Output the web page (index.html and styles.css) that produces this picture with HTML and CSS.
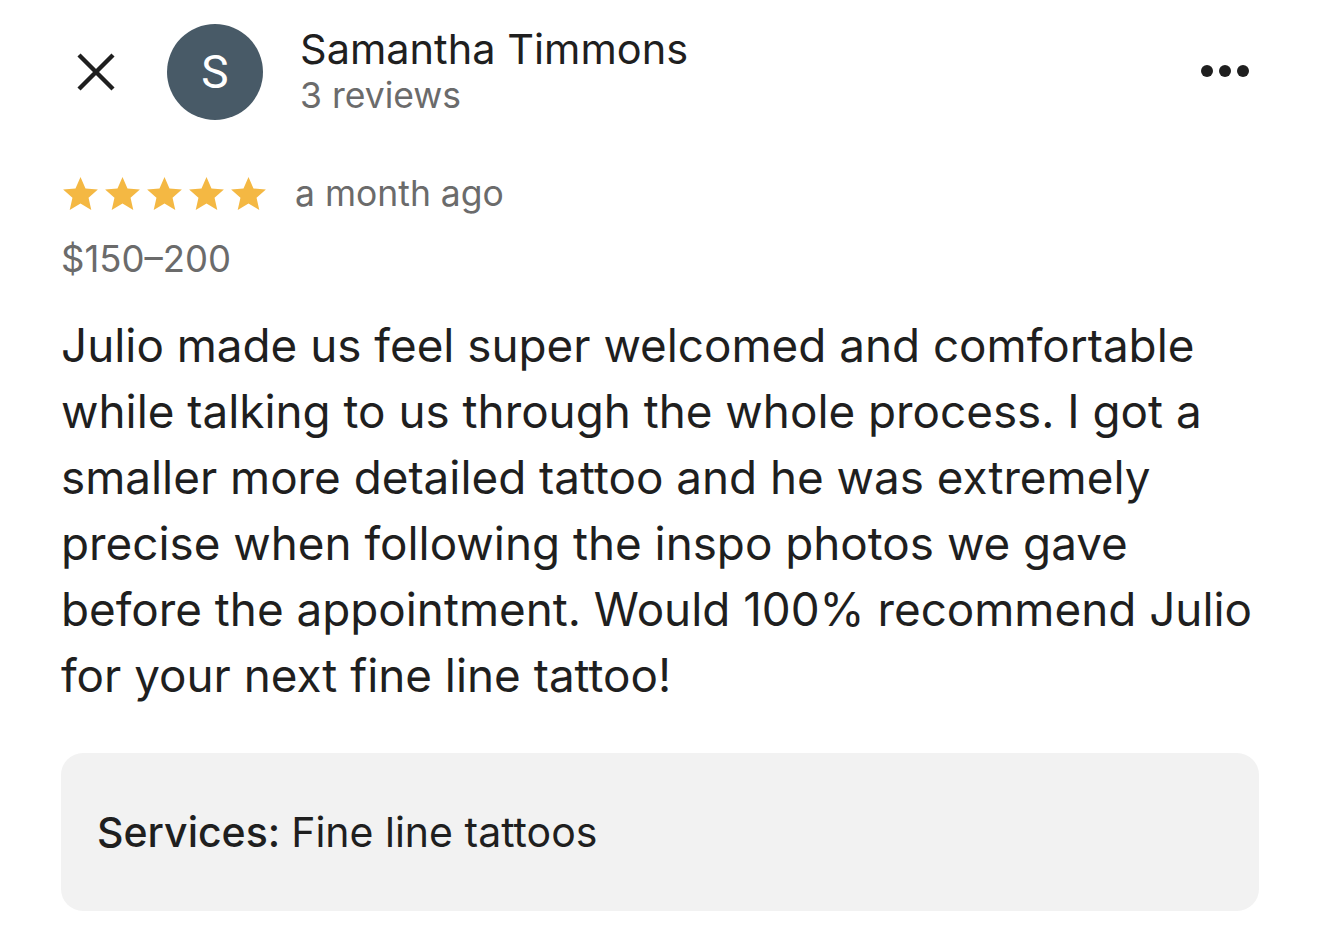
FILE: index.html
```html
<!DOCTYPE html>
<html lang="en">
<head>
<meta charset="utf-8">
<title>Review</title>
<link rel="stylesheet" href="styles.css">
</head>
<body>
<main class="page">
  <header class="header">
    <button class="close" aria-label="Close">
      <svg viewBox="0 0 40 40" width="40" height="40"><path d="M3 3 L37 37 M37 3 L3 37" stroke="#1f1f1f" stroke-width="4.4" fill="none"/></svg>
    </button>
    <div class="avatar">S</div>
    <div class="who">
      <div class="name">Samantha Timmons</div>
      <div class="count">3 reviews</div>
    </div>
    <button class="more" aria-label="More">
      <span class="dot"></span><span class="dot"></span><span class="dot"></span>
    </button>
  </header>

  <div class="meta">
    <div class="stars">
      <svg viewBox="1.2 1.6 21.6 20.5"><path d="M12 1.6l3.1 7.1 7.7.7-5.8 5.1 1.7 7.6L12 18.1l-6.7 4 1.7-7.6L1.2 9.4l7.7-.7z"/></svg>
      <svg viewBox="1.2 1.6 21.6 20.5"><path d="M12 1.6l3.1 7.1 7.7.7-5.8 5.1 1.7 7.6L12 18.1l-6.7 4 1.7-7.6L1.2 9.4l7.7-.7z"/></svg>
      <svg viewBox="1.2 1.6 21.6 20.5"><path d="M12 1.6l3.1 7.1 7.7.7-5.8 5.1 1.7 7.6L12 18.1l-6.7 4 1.7-7.6L1.2 9.4l7.7-.7z"/></svg>
      <svg viewBox="1.2 1.6 21.6 20.5"><path d="M12 1.6l3.1 7.1 7.7.7-5.8 5.1 1.7 7.6L12 18.1l-6.7 4 1.7-7.6L1.2 9.4l7.7-.7z"/></svg>
      <svg viewBox="1.2 1.6 21.6 20.5"><path d="M12 1.6l3.1 7.1 7.7.7-5.8 5.1 1.7 7.6L12 18.1l-6.7 4 1.7-7.6L1.2 9.4l7.7-.7z"/></svg>
    </div>
    <span class="when">a month ago</span>
  </div>

  <div class="price">$150–200</div>

  <p class="text">Julio made us feel super welcomed and comfortable while talking to us through the whole process. I got a smaller more detailed tattoo and he was extremely precise when following the inspo photos we gave before the appointment. Would 100% recommend Julio for your next fine line tattoo!</p>

  <div class="services"><strong>Services:</strong> Fine line tattoos</div>
</main>
</body>
</html>
```

FILE: styles.css
```css
* { box-sizing: border-box; }
html, body { margin: 0; background: #fff; }
body {
  font-family: Inter, Roboto, "Liberation Sans", sans-serif;
  color: #1f1f1f;
}
.page {
  width: 1320px;
  padding: 24px 61px 0 61px;
}
.header {
  display: flex;
  align-items: center;
  height: 96px;
  padding-left: 15px;
}
.close {
  width: 40px;
  height: 40px;
  padding: 0;
  border: 0;
  background: none;
  display: flex;
}
.avatar {
  width: 96px;
  height: 96px;
  border-radius: 50%;
  background: #485a67;
  color: #fff;
  margin-left: 51px;
  display: flex;
  align-items: center;
  justify-content: center;
  font-family: Roboto, sans-serif;
  font-size: 46px;
  line-height: 1;
}
.who {
  margin-left: 37px;
  flex: 1;
  align-self: flex-start;
  padding-top: 0;
}
.name {
  font-size: 41.5px;
  line-height: 50px;
  color: #1f1f1f;
}
.count {
  font-size: 35.5px;
  line-height: 44px;
  color: #6b6b6b;
}
.more {
  display: flex;
  gap: 6px;
  padding: 0;
  border: 0;
  background: none;
  margin-right: 10px;
  margin-bottom: 2px;
}
.dot {
  width: 12px;
  height: 12px;
  border-radius: 50%;
  background: #1f1f1f;
}
.meta {
  display: flex;
  align-items: center;
  margin-top: 53px;
  height: 40px;
}
.stars {
  display: flex;
  gap: 7px;
  margin-left: 2px;
}
.stars svg {
  width: 35px;
  height: 33px;
  fill: #f4b843;
}
.when {
  margin-left: 29px;
  font-size: 35.5px;
  color: #6b6b6b;
}
.price {
  margin-top: 24px;
  font-size: 36.5px;
  line-height: 44px;
  color: #6b6b6b;
}
.text {
  margin: 32px 0 0;
  font-size: 45.8px;
  line-height: 66px;
  color: #1f1f1f;
}
.services {
  margin-top: 44px;
  background: #f2f2f2;
  border-radius: 22px;
  height: 158px;
  display: flex;
  align-items: center;
  padding-left: 36px;
  font-size: 41px;
  color: #1f1f1f;
}
.services strong {
  font-weight: 500;
  margin-right: 11px;
}
```
